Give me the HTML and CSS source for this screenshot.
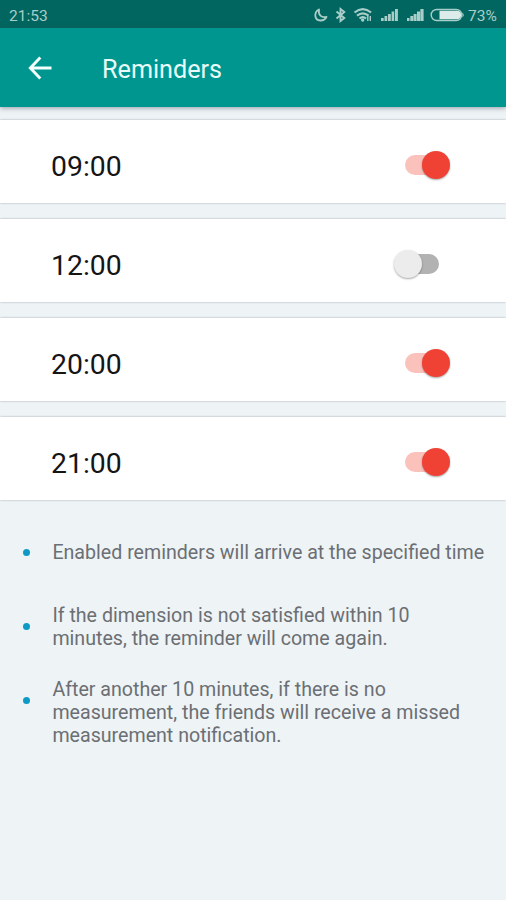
FILE: index.html
```html
<!DOCTYPE html>
<html lang="en">
<head>
<meta charset="utf-8">
<title>Reminders</title>
<link rel="stylesheet" href="styles.css">
</head>
<body>
<div class="status">
  <span class="clock">21:53</span>
  <svg class="status-icons" width="154" height="28" viewBox="312 0 154 28" fill="#a9ceca">
    <path d="M319 9.500c-5.200 2.700-5 10.700 1.300 11 2.800.1 5.200-1.200 6.200-3.600-5.200 1.300-8.500-2-7.500-7.400z" fill="none" stroke="#a9ceca" stroke-width="1.800" stroke-linejoin="round"/>
    <path d="M336.500 11.500l7.800 6.500-3.800 3V9l3.800 3-7.800 6.500" fill="none" stroke="#a9ceca" stroke-width="1.900"/>
    <g fill="none" stroke="#a9ceca" stroke-width="2.200">
      <path d="M354.500 12.500q8.300-6.800 16.600 0M357 15.700q5.800-4.700 11.600 0M359.500 18.500q3.300-2.600 6.600 0"/>
    </g>
    <circle cx="362.700" cy="20" r="1.700"/>
    <path d="M367.800 16v5M370.300 16v5" stroke="#a9ceca" stroke-width="1.400"/>
    <path d="M381 18h2.700v3H381zM384.500 16h2.700v5h-2.700zM388 14h2.800v7H388zM391.600 11.500h2.600V21h-2.600zM395 9h2.900v12H395z"/>
    <path d="M407 18h2.500v3H407zM410.300 16h2.900v5h-2.900zM413.600 14h3v7h-3zM417 11.500h3.100V21H417zM420.400 9h3.200v12h-3.200z"/>
    <rect x="431.200" y="9.500" width="30.500" height="11" rx="5.500" fill="none" stroke="#a9ceca" stroke-width="1.400"/>
    <path d="M439.500 10.800h17.500a4.200 4.200 0 0 1 0 8.400h-17.500z" fill="#dcecea"/>
    <path d="M462.500 12.500q2.500 2.500 0 5z"/>
  </svg>
  <span class="percent">73%</span>
</div>
<header class="appbar">
  <svg class="back" width="24" height="24" viewBox="0 0 24 24" fill="none" stroke="#f1fffd" stroke-width="2.900"><path d="M12.300 1.500L2.300 12l10 10.500M2.500 12H23.500"/></svg>
  <h1>Reminders</h1>
</header>
<main>
  <section class="cards">
    <div class="card"><span class="time">09:00</span><span class="switch on"><i></i></span></div>
    <div class="card"><span class="time">12:00</span><span class="switch"><i></i></span></div>
    <div class="card"><span class="time">20:00</span><span class="switch on"><i></i></span></div>
    <div class="card"><span class="time">21:00</span><span class="switch on"><i></i></span></div>
  </section>
  <ul class="notes">
    <li><p>Enabled reminders will arrive at the specified time</p></li>
    <li><p>If the dimension is not satisfied within 10<br>minutes, the reminder will come again.</p></li>
    <li><p>After another 10 minutes, if there is no<br>measurement, the friends will receive a missed<br>measurement notification.</p></li>
  </ul>
</main>
</body>
</html>
```
FILE: styles.css
```css
* { box-sizing: border-box; }
body {
  margin: 0;
  height: 900px;
  overflow: hidden;
  background: #eef3f6;
  font-family: Roboto, sans-serif;
}
.status {
  display: flex;
  align-items: center;
  height: 28px;
  padding: 0 8px 0 9px;
  background: #00665f;
  color: #a9ceca;
  font-size: 15.500px;
}
.clock { padding-top: 3px; }
.status-icons { display: block; margin-left: auto; }
.percent {
  width: 30px;
  margin-left: 2px;
  padding-top: 3px;
  font-size: 15.500px;
  white-space: nowrap;
}
.appbar {
  display: flex;
  align-items: center;
  position: relative;
  height: 79px;
  padding: 0 0 0 28px;
  background: #009690;
  box-shadow: 0 1px 5px rgba(60, 70, 90, .5);
}
.back { display: block; }
h1 {
  margin: 4px 0 0 50px;
  color: #e8fbf8;
  font-size: 25.200px;
  font-weight: 400;
  line-height: 30px;
}
.cards {
  display: grid;
  row-gap: 16px;
  padding-top: 13px;
}
.card {
  display: flex;
  align-items: center;
  justify-content: space-between;
  height: 82.900px;
  padding: 0 56px 0 51px;
  background: #fff;
  box-shadow: 0 0 2px rgba(50, 60, 70, .4);
}
.time {
  padding-top: 11px;
  color: #151515;
  font-size: 28.400px;
  line-height: 34px;
}
.switch {
  display: flex;
  align-items: center;
  width: 34px;
  height: 20px;
  margin: 7px 11px 0 0;
  border-radius: 10px;
  background: #b2b2b2;
}
.switch i {
  flex: none;
  width: 28px;
  height: 28px;
  margin-left: -11px;
  border-radius: 50%;
  background: #ececec;
  box-shadow: 0 1px 2px rgba(0, 0, 0, .35);
}
.switch.on {
  justify-content: flex-end;
  background: #fbc2bc;
}
.switch.on i {
  margin-right: -11px;
  background: #f04135;
}
.notes {
  margin: 0;
  padding: 41px 0 0 23px;
  list-style: none;
}
.notes li {
  display: flex;
  align-items: center;
  margin-bottom: 40px;
}
.notes li::before {
  content: "";
  flex: none;
  width: 7px;
  height: 7px;
  margin-right: 22.400px;
  border-radius: 50%;
  background: #0d9bc6;
}
.notes li + li { margin-bottom: 28px; }
.notes li:last-child { align-items: flex-start; }
.notes li:last-child::before { margin-top: 19px; }
.notes p {
  margin: 0;
  color: #6b6f73;
  font-size: 19.630px;
  line-height: 23px;
  white-space: nowrap;
}
```
